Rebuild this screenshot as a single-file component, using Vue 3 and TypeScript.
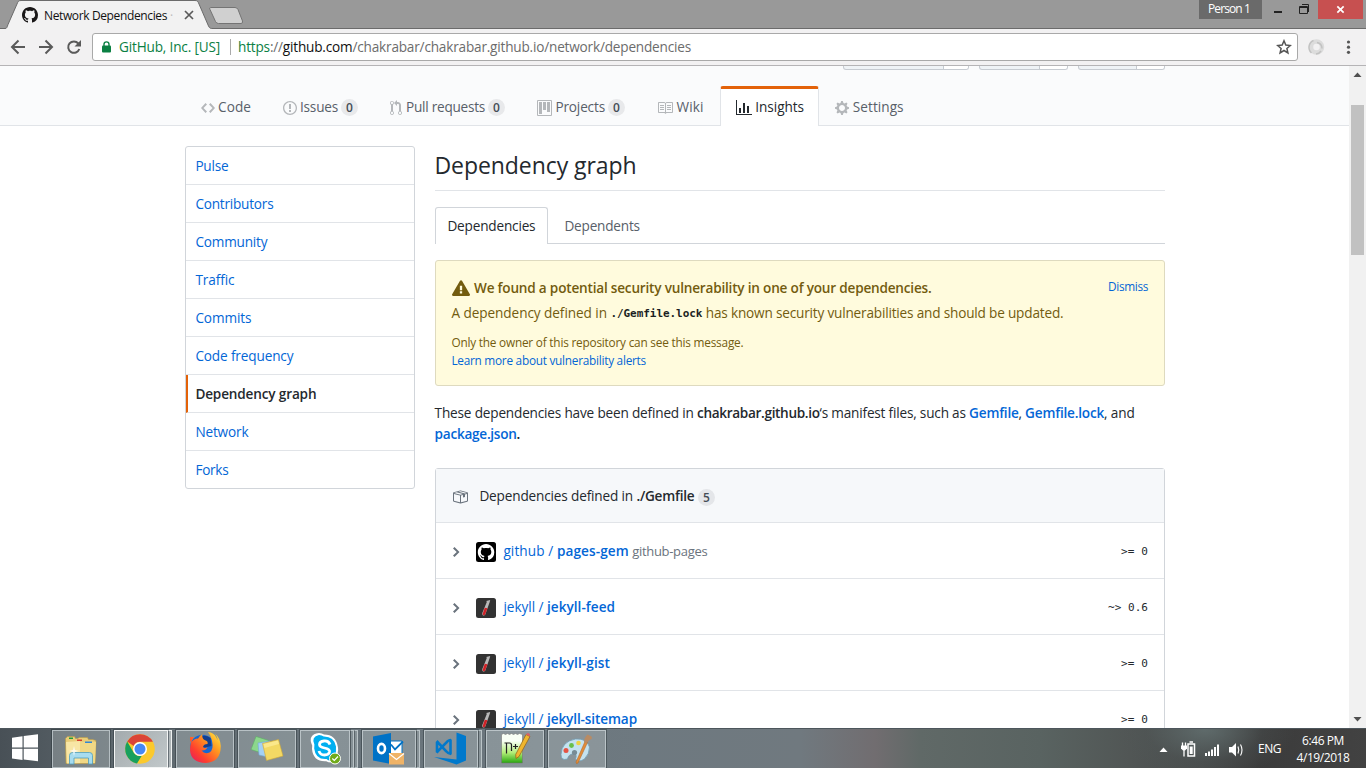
<script setup lang="ts">
interface NavItem { label: string; icon: string; box: string; iw: number; ih: number; slot: number; text: number; width: number; count?: number; active?: boolean }
interface Dep { owner: string; name: string; ownerW: number; nameW: number; note?: string; version: string; versionW: number }

// Spreads the letters of an element so that its text takes the given width.
const vFit = {
  mounted(el: HTMLElement, binding: { value: number }) {
    const natural = el.getBoundingClientRect().width
    const count = (el.textContent ?? '').length
    el.style.letterSpacing = `${(binding.value - natural) / count}px`
  },
}

const mark = 'M8 0C3.58 0 0 3.58 0 8c0 3.54 2.29 6.53 5.47 7.59.4.07.55-.17.55-.38 0-.19-.01-.82-.01-1.49-2.01.37-2.53-.49-2.69-.94-.09-.23-.48-.94-.82-1.13-.28-.15-.68-.52-.01-.53.63-.01 1.08.58 1.23.82.72 1.21 1.87.87 2.33.66.07-.52.28-.87.51-1.07-1.78-.2-3.64-.89-3.64-3.95 0-.87.31-1.59.82-2.15-.08-.2-.36-1.02.08-2.12 0 0 .67-.21 2.2.82.64-.18 1.32-.27 2-.27.68 0 1.36.09 2 .27 1.53-1.04 2.2-.82 2.2-.82.44 1.1.16 1.92.08 2.12.51.56.82 1.27.82 2.15 0 3.07-1.87 3.75-3.65 3.95.29.25.54.73.54 1.48 0 1.07-.01 1.93-.01 2.2 0 .21.15.46.55.38A8.013 8.013 0 0 0 16 8c0-4.42-3.58-8-8-8z'

const nav: NavItem[] = [
  { label: 'Code', box: '0 0 14 16', iw: 14, ih: 16, slot: 17, text: 33, width: 82, icon: 'M9.5 3L8 4.5 11.5 8 8 11.5 9.5 13 14 8 9.5 3zm-5 0L0 8l4.5 5L6 11.5 2.5 8 6 4.5 4.5 3z' },
  { label: 'Issues', box: '0 0 14 16', iw: 14, ih: 16, slot: 17, text: 38, width: 107, count: 0, icon: 'M7 2.3c3.14 0 5.7 2.56 5.7 5.7s-2.56 5.7-5.7 5.7A5.71 5.71 0 0 1 1.3 8c0-3.14 2.56-5.7 5.7-5.7zM7 1C3.14 1 0 4.14 0 8s3.14 7 7 7 7-3.14 7-7-3.14-7-7-7zm1 3H6v5h2V4zm0 6H6v2h2v-2z' },
  { label: 'Pull requests', box: '0 0 12 16', iw: 12, ih: 16, slot: 16, text: 79, width: 147, count: 0, icon: 'M11 11.28V5c-.03-.78-.34-1.47-.94-2.06C9.46 2.35 8.78 2.03 8 2H7V0L4 3l3 3V4h1c.27.02.48.11.69.31.21.2.3.42.31.69v6.28A1.993 1.993 0 0 0 10 15a1.993 1.993 0 0 0 1-3.72zm-1 2.92c-.66 0-1.2-.55-1.2-1.2 0-.65.55-1.2 1.2-1.2.65 0 1.2.55 1.2 1.2 0 .65-.55 1.2-1.2 1.2zM4 3c0-1.11-.89-2-2-2a1.993 1.993 0 0 0-1 3.72v6.56A1.993 1.993 0 0 0 2 15a1.993 1.993 0 0 0 1-3.72V4.72c.59-.34 1-.98 1-1.72zm-.8 10c0 .66-.55 1.2-1.2 1.2-.65 0-1.2-.55-1.2-1.2 0-.65.55-1.2 1.2-1.2.65 0 1.2.55 1.2 1.2zM2 4.2C1.34 4.2.8 3.65.8 3c0-.65.55-1.2 1.2-1.2.65 0 1.2.55 1.2 1.2 0 .65-.55 1.2-1.2 1.2z' },
  { label: 'Projects', box: '0 0 15 16', iw: 15, ih: 16, slot: 18.4, text: 49.6, width: 120, count: 0, icon: 'M10 12h3V2h-3v10zm-4-2h3V2H6v8zm-4 4h3V2H2v12zm-1 1h13V1H1v14zM14 0H1a1 1 0 0 0-1 1v14a1 1 0 0 0 1 1h13a1 1 0 0 0 1-1V1a1 1 0 0 0-1-1z' },
  { label: 'Wiki', box: '0 0 16 16', iw: 16, ih: 16, slot: 19.6, text: 27, width: 79, icon: 'M3 5h4v1H3V5zm0 3h4V7H3v1zm0 2h4V9H3v1zm11-5h-4v1h4V5zm0 2h-4v1h4V7zm0 2h-4v1h4V9zm2-6v9c0 .55-.45 1-1 1H9.5l-1 1-1-1H2c-.55 0-1-.45-1-1V3c0-.55.45-1 1-1h5.5l1 1 1-1H15c.55 0 1 .45 1 1zm-8 .5L7.5 3H2v9h6V3.5zm7-.5H9.5l-.5.5V12h6V3z' },
  { label: 'Insights', box: '0 0 16 16', iw: 16, ih: 16, slot: 19.3, text: 48.7, width: 99, active: true, icon: 'M16 14v1H0V0h1v14h15zM5 13H3V8h2v5zm4 0H7V3h2v10zm4 0h-2V6h2v7z' },
  { label: 'Settings', box: '0 0 14 16', iw: 14, ih: 16, slot: 17.8, text: 50.8, width: 101, icon: 'M14 8.77v-1.6l-1.94-.64-.45-1.09.88-1.84-1.13-1.13-1.81.91-1.09-.45-.69-1.92h-1.6l-.63 1.94-1.11.45-1.84-.88-1.13 1.13.91 1.81-.45 1.09L0 7.23v1.59l1.94.64.45 1.09-.88 1.84 1.13 1.13 1.81-.91 1.09.45.69 1.92h1.59l.63-1.94 1.11-.45 1.84.88 1.13-1.13-.92-1.81.47-1.09L14 8.75v.02zM7 11c-1.66 0-3-1.34-3-3s1.34-3 3-3 3 1.34 3 3-1.34 3-3 3z' },
]

const menu = [
  { label: 'Pulse', w: 33 }, { label: 'Contributors', w: 78 }, { label: 'Community', w: 72 },
  { label: 'Traffic', w: 39 }, { label: 'Commits', w: 56 }, { label: 'Code frequency', w: 98 },
  { label: 'Dependency graph', w: 121, active: true }, { label: 'Network', w: 53 }, { label: 'Forks', w: 33 },
]

const deps: Dep[] = [
  { owner: 'github', name: 'pages-gem', ownerW: 53.5, nameW: 72, note: 'github-pages', version: '>= 0', versionW: 27 },
  { owner: 'jekyll', name: 'jekyll-feed', ownerW: 43.6, nameW: 68, version: '~> 0.6', versionW: 40 },
  { owner: 'jekyll', name: 'jekyll-gist', ownerW: 43.6, nameW: 63, version: '>= 0', versionW: 27 },
  { owner: 'jekyll', name: 'jekyll-sitemap', ownerW: 43.6, nameW: 90, version: '>= 0', versionW: 27 },
]
</script>

<template>
  <div class="screen">
    <header class="tabstrip">
      <div class="tab">
        <svg class="tab-shape" viewBox="0 0 250 30"><path d="M0 28.500H5C7 28.500 7 27 8 24.500L17 4C18 1.500 18.500.500 21 .500H195C197.500 .500 198 1.500 199 4L208.500 26C209.500 28.500 211 28.500 213 28.500V30H0z" fill="#f2f2f2" stroke="#6b6b6b" /><path d="M0 29.500H214" stroke="#f2f2f2" /><path d="M210.500 7.500H235Q237 7.500 238 9.500L242.500 21Q243 23.500 241 23.500H218.500Q216.500 23.500 215.500 21.500L210 9.500Q209 7.500 210.500 7.500z" fill="#d0d0d0" stroke="#747474" /></svg>
        <svg class="favicon" viewBox="0 0 16 16"><path :d="mark" fill="#191717" /></svg>
        <span v-fit="123" class="tab-title">Network Dependencies</span><span class="tab-fade">·</span>
        <svg class="tab-close" viewBox="0 0 10 10"><path d="M1 1l8 8M9 1L1 9" stroke="#5a5a5a" stroke-width="1.700" /></svg>
      </div>
      <div class="win-controls">
        <span class="person"><span v-fit="42" class="fit">Person 1</span></span>
        <svg class="min-max" viewBox="1262 0 56 19"><path d="M1274 12h8" stroke="#222" stroke-width="2" /><path d="M1299.500 6.500h8v7h-8zM1299 7.500h9M1302 4.500h6.500V12" fill="none" stroke="#222" /></svg>
        <span class="close"><svg viewBox="0 0 10 10"><path d="M1.500 1.500l7 7M8.500 1.500l-7 7" stroke="#fff" stroke-width="1.900" /></svg></span>
      </div>
    </header>

    <div class="toolbar">
      <svg class="nav-btns" viewBox="0 30 92 35"><g fill="none" stroke="#5a5a5a" stroke-width="2"><path d="M25 47H12.500M18.500 40.500L12 47l6.500 6.500" /><path d="M39 47h12.500M45.500 40.500L52 47l-6.500 6.500" /><path d="M78.300 43.500A5.700 5.700 0 1 0 79.300 49" /></g><path d="M81 40v6.500h-6.500z" fill="#5a5a5a" /></svg>
      <div class="omnibox">
        <svg class="lock" viewBox="0 0 9 12"><rect y="4.500" width="9" height="7" rx="1" fill="#0b8043" /><path d="M2 5V3.200a2.500 2.300 0 0 1 5 0V5" fill="none" stroke="#0b8043" stroke-width="1.400" /></svg>
        <span v-fit="101" class="secure">GitHub, Inc. [US]</span>
        <i class="divider"></i>
        <span v-fit="453" class="url"><b>https</b>://<em>github.com</em>/chakrabar/chakrabar.github.io/network/dependencies</span>
        <svg class="star" viewBox="0 0 16 16"><path d="M8 1.800l1.800 4.300 4.500.4-3.400 3 1 4.400L8 11.500l-3.900 2.400 1-4.400-3.400-3 4.500-.4z" fill="none" stroke="#555" stroke-width="1.500" /></svg>
      </div>
      <svg class="toolbar-end" viewBox="1298 30 68 35"><circle cx="1316.500" cy="47" r="5.500" fill="none" stroke="#dcdcdc" stroke-width="4.500" /><path d="M1311.500 53a7.500 7.500 0 0 1 2-12.500M1317 42.500q5 1 5 6M1321 51a6.500 6.500 0 0 1-5 3" fill="none" stroke="#c2c2c2" stroke-width="1.500" /><circle cx="1348.500" cy="42" r="1.600" fill="#555" /><circle cx="1348.500" cy="47.200" r="1.600" fill="#555" /><circle cx="1348.500" cy="52.300" r="1.600" fill="#555" /></svg>
    </div>

    <div class="viewport">
      <div class="page">
        <div class="repo-head">
          <div class="stumps">
            <span class="stump watch"><i></i></span><span class="stump starred"><i></i></span><span class="stump fork"><i></i></span>
          </div>
          <nav class="reponav">
            <a v-for="n in nav" :key="n.label" class="nav-item" :class="{ active: n.active }" :style="{ width: n.width + 'px' }">
              <span class="nav-icon" :style="{ width: n.slot + 'px' }"><svg :viewBox="n.box" :width="n.iw" :height="n.ih"><path :d="n.icon" fill="currentColor" fill-rule="evenodd" /></svg></span>
              <span v-fit="n.text" class="fit">{{ n.label }}</span>
              <span v-if="n.count !== undefined" class="counter nav-counter">{{ n.count }}</span>
            </a>
          </nav>
        </div>

        <div class="columns">
          <aside class="menu">
            <a v-for="m in menu" :key="m.label" class="menu-item" :class="{ selected: m.active }"><span v-fit="m.w" class="fit">{{ m.label }}</span></a>
          </aside>

          <main class="content">
            <div class="subhead"><h2 v-fit="202" class="fit">Dependency graph</h2></div>
            <div class="tabnav">
              <a class="tabnav-tab on"><span v-fit="88" class="fit">Dependencies</span></a>
              <a class="tabnav-tab"><span v-fit="75.500" class="fit">Dependents</span></a>
            </div>

            <section class="flash">
              <div class="flash-text">
                <div class="flash-title">
                  <svg viewBox="0 0 16 16" width="18" height="18"><path fill="currentColor" fill-rule="evenodd" d="M8.893 1.500c-.183-.31-.52-.5-.887-.5s-.703.19-.886.5L.138 13.499a.98.98 0 0 0 0 1.001c.193.31.53.501.886.501h13.964c.367 0 .704-.19.877-.5a1.030 1.030 0 0 0 .01-1.002L8.893 1.500zm.133 11.497H6.987v-2.003h2.039v2.003zm0-3.004H6.987V5.987h2.039v4.006z" /></svg>
                  <strong v-fit="457.500" class="fit">We found a potential security vulnerability in one of your dependencies.</strong>
                </div>
                <p class="flash-line"><span v-fit="159" class="fit">A dependency defined in </span><code v-fit="92" class="fit">./Gemfile.lock</code><span v-fit="361" class="fit"> has known security vulnerabilities and should be updated.</span></p>
                <p class="flash-small"><span v-fit="292" class="fit">Only the owner of this repository can see this message.</span></p>
                <p class="flash-small"><a v-fit="194.500" class="fit link">Learn more about vulnerability alerts</a></p>
              </div>
              <a class="dismiss"><span v-fit="40" class="fit">Dismiss</span></a>
            </section>

            <div class="intro">
              <p><span v-fit="262.500" class="fit">These dependencies have been defined in </span><strong v-fit="122.500" class="fit">chakrabar.github.io</strong><span v-fit="149.500" class="fit">‘s manifest files, such as </span><strong v-fit="49.500" class="fit link">Gemfile</strong><span v-fit="6.500" class="fit">, </span><strong v-fit="79" class="fit link">Gemfile.lock</strong><span v-fit="30.500" class="fit">, and</span></p>
              <p><strong v-fit="82" class="fit link">package.json</strong><strong class="fit">.</strong></p>
            </div>

            <section class="box">
              <div class="box-head">
                <svg class="package" viewBox="0 0 16 16" width="16" height="16"><path fill="currentColor" fill-rule="evenodd" d="M1 4.270v7.470c0 .45.3.84.75.97l6.500 1.730c.16.05.34.05.5 0l6.500-1.730c.45-.13.75-.52.75-.97V4.270c0-.45-.3-.84-.75-.97l-6.500-1.740a1.400 1.400 0 0 0-.5 0L1.750 3.300c-.45.13-.75.52-.75.97zm7 9.090l-6-1.590V5l6 1.610v6.750zM2 4l2.500-.67L11 5.060l-2.500.67L2 4zm13 7.770l-6 1.590V6.610l2-.55V8.500l2-.53V5.530L15 5v6.770zm-2-7.240L6.500 2.800l2-.53L15 4l-2 .53z" /></svg>
                <span v-fit="157" class="fit">Dependencies defined in </span><strong v-fit="58" class="fit">./Gemfile</strong><span class="counter box-counter">5</span>
              </div>
              <div v-for="d in deps" :key="d.name" class="row">
                <svg class="chevron" viewBox="0 0 8 16" width="8" height="16"><path d="M7.500 8l-5 5L1 11.500 4.750 8 1 4.500 2.500 3l5 5z" fill="#6a737d" /></svg>
                <svg v-if="d.owner === 'github'" class="avatar" viewBox="0 0 20 20"><rect width="20" height="20" rx="2.500" fill="#000" /><path :d="mark" fill="#fff" transform="translate(1.800 2) scale(1.030)" /></svg>
                <svg v-else class="avatar" viewBox="0 0 20 20"><rect width="20" height="20" rx="2.500" fill="#323232" /><path d="M10.300 3l3.900-1-.5 1.900-4.400 12.700q-1 1.500-2.300.8-1.200-.8-.7-2.300L10.800 4z" fill="#b8b8b8" /><path d="M8.700 9.700l2.800.5-2.400 6.200q-.8 1.200-1.700.8-1-.5-.6-1.800z" fill="#cf2227" /></svg>
                <span class="dep-name link"><span v-fit="d.ownerW" class="fit">{{ d.owner + ' / ' }}</span><strong v-fit="d.nameW" class="fit">{{ d.name }}</strong></span>
                <span v-if="d.note" v-fit="75" class="fit note">{{ d.note }}</span>
                <span class="version"><span v-fit="d.versionW" class="fit">{{ d.version }}</span></span>
              </div>
            </section>
          </main>
        </div>
      </div>
      <div class="scrollbar">
        <svg viewBox="0 0 17 17"><path d="M4.500 11l4-4.500 4 4.500z" fill="#505050" /></svg>
        <div class="thumb"></div>
        <svg viewBox="0 0 17 17"><path d="M4.500 6l4 4.500 4-4.500z" fill="#505050" /></svg>
      </div>
    </div>

    <footer class="taskbar">
      <svg class="start" viewBox="0 728 52 40"><path d="M12 736.800l10.500-1.500v11.300H12zM23.700 735.100L38 733.300v13.300H23.700zM12 747.800h10.500v11.300L12 757.600zM23.700 747.800H38v12.500l-14.300-1.800z" fill="#fff" /></svg>
      <div class="apps">
        <div class="app"><svg class="icon" viewBox="52 729 58 38">
          <path d="M65.500 737.500l2-2h7l1 2h2l2-1h8l1 2h4l3.500 1-1 23H66z" fill="#e9cd78" stroke="#b99a48" stroke-width=".6" /><path d="M66 741l14-1 1 22-14 .5z" fill="#f8e6a5" /><path d="M80 741h16l-1 21H80z" fill="#f1d885" /><path d="M69 736.500h4v1.500h-4z" fill="#219b3a" /><path d="M77 738.500h5v1.500h-5z" fill="#d63a2d" /><path d="M85 740.500h7v1.500h-7z" fill="#3486d2" /><path d="M69.500 763v-8.500q0-3 3-3h17q3 0 3 3v8.500h-4v-6H74v6z" fill="#a7dcef" stroke="#4e9dbd" stroke-width=".8" /><path d="M74 745l1 4 4 1-4 1-1 4-1-4-4-1 4-1z" fill="#fff" opacity=".75" /></svg></div>
        <div class="stack"><div class="app lit"><svg class="icon" viewBox="114 729 54 38">
          <circle cx="140" cy="748" r="14.800" fill="#fbc92c" /><path d="M127.200 740.600A14.800 14.800 0 0 1 152.900 740.800H140a7 7 0 0 0-6.300 4.200z" fill="#db4437" /><path d="M127.200 740.600l6.600 11.100q3 4.200 7.800 3.200l-4.600 7.700A14.800 14.800 0 0 1 127.200 740.600z" fill="#18a05e" /><circle cx="140" cy="748" r="7" fill="#fff" /><circle cx="140" cy="748" r="5.500" fill="#4688f4" /></svg></div><div class="sliver lit"></div></div>
        <div class="app"><svg class="icon" viewBox="178.500 729.500 58 38">
          <defs><linearGradient id="fox" x1="1" y1="0" x2="0" y2="1"><stop offset="0" stop-color="#fff04a" /><stop offset=".35" stop-color="#ff9a1f" /><stop offset=".7" stop-color="#ff402e" /><stop offset="1" stop-color="#e31566" /></linearGradient></defs>
          <circle cx="205" cy="746.500" r="12.300" fill="#1767d2" /><path d="M200 738q6-5 13-.5l1 8-9 2z" fill="#153e8d" /><path d="M192.500 736.500q-.5 3 1 5.500 3-4 7-4 2-3.500 4.500-4.500-1 4 2 6 4 1 3 4-4 0-4.500 3 1.500 1.500 4.500.5-2 3.500-6 3 3 4 8 2 4.500-3 2.500-11.500-1-5.500-4-9 6 .5 8.300 5.500 1 2 1.500 2.500-.5-3-2.500-6 5 4 5.500 12 0 16-15 17-15-.5-15.800-13-.1-7.500 4-13z" fill="url(#fox)" /></svg></div>
        <div class="app"><svg class="icon" viewBox="238 730 58 38">
          <path d="M256 736.500l13 4-6 13-12-4z" fill="#8cd78d" stroke="#5cac65" stroke-width=".6" /><path d="M258 743l12-2v16.500l-11-2.500z" fill="#a4d1f4" stroke="#71a9d8" stroke-width=".6" /><path d="M262.500 743.500l16-4L283 756l-16.500 4.500z" fill="#f3d964" stroke="#cda73a" stroke-width=".6" /><path d="M263.500 744l14.500-3.500 1 3.500-14.500 4z" fill="#fff0a0" opacity=".65" /></svg></div>
        <div class="stack skype-stack"><div class="app"><svg class="icon" viewBox="300 729.500 50 38">
          <path d="M319 732.500q3 0 5 1.500 12 0 14 13 .5 3-.3 5 2 9-6.500 10-3 0-5-1.300-13 .8-14.200-12.200l.2-3.500q-5-11 6.800-12.500z" fill="#fff" /><path d="M319 734.500q3 0 4.700 1.500 10.300-.2 12.300 10l-.1 6q1.200 7.500-4.900 8-3 .1-4.500-1.500-11 .8-12.300-10.500l.2-4q-3.500-8 4.600-9.500z" fill="#00aff0" /><path d="M330 744q-1.500-4-6-3.500-4.500.5-4.500 3.500 0 2.500 5 3.500 5.500 1 5 4-.7 3-5 3-4.500 0-5.500-4" fill="none" stroke="#fff" stroke-width="2.800" /><circle cx="335" cy="758" r="5.500" fill="#70ab1b" stroke="#fff" /><path d="M332.300 758l2 2 3.700-4" fill="none" stroke="#fff" stroke-width="1.200" /></svg></div><div class="sliver"></div><div class="sliver"></div></div>
        <div class="stack"><div class="app"><svg class="icon" viewBox="362 729.500 54 38">
          <path d="M390 740.500h12v15h-12z" fill="#fff" stroke="#0072c6" /><path d="M391 744l4 5 8-8" fill="none" stroke="#0072c6" stroke-width="1.800" /><path d="M373 736l18-3.500v31L373 760z" fill="#0072c6" /><ellipse cx="381.500" cy="748" rx="3.500" ry="4.600" fill="none" stroke="#fff" stroke-width="2.600" /><path d="M389 752.500h15v11.500h-15z" fill="#efb367" /><path d="M389 753l7.500 6 7.500-6" fill="none" stroke="#fff" stroke-width="1.200" /></svg></div><div class="sliver"></div></div>
        <div class="stack"><div class="app"><svg class="icon" viewBox="424 729.500 54 38">
          <path d="M456.500 732l9.500 3.500v24.500l-9.500 4-22.500-7.500 22.500 2.500z" fill="#0079cc" /><path d="M451 739.500q-3 0-5 3l-8.500 8.500M451 753.500q-2.500 0-4.500-2.500l-9-9.500M438.500 740.500l-1.500 1.500v9l1.500 1M450.500 739v15" fill="none" stroke="#0079cc" stroke-width="2.600" /></svg></div><div class="sliver"></div></div>
        <div class="app"><svg class="icon" viewBox="486 729.500 58 38">
          <defs><linearGradient id="pad" x1="0" y1="0" x2="0" y2="1"><stop offset=".25" stop-color="#f9fff5" /><stop offset=".65" stop-color="#b1ed77" /><stop offset="1" stop-color="#27a60e" /></linearGradient></defs>
          <path d="M501.500 734l2-1 2 1 2-1 2 1 2-1 2 1 2-1 2 1 2-1 3 1v28.500h-21z" fill="url(#pad)" stroke="#777" stroke-width=".6" /><path d="M506.500 753v-10.500M504.500 742.500h5q2 0 2 2v6M513 746h5M515.500 743.500v5M519.500 746h4M521.500 744v4" fill="none" stroke="#222" stroke-width="1.200" /><path d="M526 734l4 2-11 20-3 2-.3-4z" fill="#efb62e" stroke="#916017" stroke-width=".7" /><path d="M526 734q2-3 4 0l0 2z" fill="#db5f66" /></svg></div>
        <div class="app"><svg class="icon" viewBox="548.500 729.500 58 38">
          <path d="M561.500 754q.5-13 14.500-15.500 11-1 14 8 0 7-5 12-6 4-9 0 2-5-2-5-5 0-6 5-6.500 2-6.500-4.500z" fill="#c5e2ef" stroke="#719db4" stroke-width=".8" /><circle cx="566.500" cy="750" r="2.500" fill="#e45445" /><circle cx="572" cy="745" r="2.400" fill="#68bf4b" /><circle cx="579" cy="742.500" r="2.300" fill="#eed344" /><circle cx="575" cy="752" r="2.600" fill="#778c96" /><path d="M585.500 741l2.500 1-9.500 20.500q-2 1.500-2-1z" fill="#e28c3a" stroke="#ad6422" stroke-width=".5" /><path d="M584.500 741.500q0-4 3.500-7.500l4 2 .5 2q-3.500 2-5 4.500z" fill="#b88b64" /></svg></div>
      </div>
      <svg class="tray" viewBox="1150 728 106 40"><path d="M1159.500 751l4-4.500 4 4.500z" fill="#fff" /><g fill="none" stroke="#fff"><path d="M1188 743h6.500v12H1188zM1189.500 741h3.500" stroke-width="1.500" /><path d="M1191.200 745.500v7.500" stroke-width="3" /><path d="M1182.500 741.500v4M1185.500 741.500v4M1184 748v7.500" stroke-width="1.300" /></g><path d="M1181 744.500h6v3l-2 2h-2l-2-2z" fill="#fff" /><path d="M1205 752h2v3h-2zM1208 750.500h2v4.500h-2zM1211 748.500h2v6.500h-2zM1214 746h2v9h-2zM1217 743.500h2V755h-2z" fill="#fff" /><path d="M1229 746h3l4-4v13.500l-4-4h-3z" fill="#fff" /><path d="M1238 745.500q1.500 3.500 0 7M1240.500 743.500q3 5.500 0 11" fill="none" stroke="#fff" stroke-width="1.100" /></svg>
      <span class="lang"><span v-fit="23" class="fit">ENG</span></span>
      <div class="clock"><span v-fit="42" class="fit">6:46 PM</span><span v-fit="53" class="fit">4/19/2018</span></div>
    </footer>
  </div>
</template>

<style>
html, body { margin: 0; overflow: hidden; }
</style>

<style scoped>
.screen { width: 1366px; height: 768px; display: flex; flex-direction: column; overflow: hidden; background: #fff; font: 13.6px/21px "Open Sans", "Noto Sans", sans-serif; color: #24292e; }
.screen * { box-sizing: border-box; }
svg { display: block; flex: none; }
p, h2 { margin: 0; }
strong { font-weight: 600; }
.fit { display: inline-block; white-space: pre; flex: none; }
.link { color: #0366d6; }

.tabstrip { height: 29px; flex: none; display: flex; justify-content: space-between; background: #999; box-shadow: inset 0 -1px #6b6b6b; }
.tab { position: relative; width: 250px; height: 30px; display: flex; align-items: center; padding-left: 22px; }
.tab-shape { position: absolute; left: 0; top: 0; width: 250px; height: 30px; }
.favicon { position: relative; width: 16px; height: 16px; margin-right: 6px; }
.tab-title { position: relative; flex: none; font-size: 12px; white-space: nowrap; color: #111; }
.tab-fade { position: relative; width: 17px; padding-left: 3px; color: #bbb; font-size: 12px; }
.tab-close { position: relative; width: 10px; height: 10px; }
.win-controls { display: flex; height: 19px; padding-right: 3px; }
.person { width: 63px; padding-left: 9px; background: #6a6a6a; color: #fff; font-size: 12px; line-height: 18px; white-space: nowrap; }
.min-max { width: 56px; height: 19px; }
.close { width: 45px; display: flex; align-items: center; justify-content: center; background: #c75050; }
.close svg { width: 9px; height: 9px; }

.toolbar { height: 37px; flex: none; display: flex; align-items: center; background: #f2f1f2; border-bottom: 1px solid #b5b4b6; }
.nav-btns { width: 92px; height: 35px; }
.omnibox { width: 1206px; height: 28px; display: flex; align-items: center; padding: 0 5px 0 9px; background: #fff; border: 1px solid #a9a9a9; border-radius: 3px; white-space: nowrap; font-size: 13.6px; }
.lock { width: 9px; height: 12px; margin-right: 8px; }
.secure, .url { margin-bottom: 2px; }
.secure { color: #0b8043; }
.divider { width: 1px; height: 16px; margin: 0 7px 0 10px; background: #aaa; }
.url { color: #6c6c6c; }
.url b { font-weight: 400; color: #0b8043; }
.url em { font-style: normal; color: #111; }
.star { width: 16px; height: 16px; margin-left: auto; }
.toolbar-end { width: 68px; height: 35px; }

.viewport { height: 662px; flex: none; display: flex; overflow: hidden; }
.page { width: 1349px; height: 662px; overflow: hidden; }
.repo-head { height: 60px; padding: 0 184px 0 185px; background: #fafbfc; border-bottom: 1px solid #e1e4e8; }
.stumps { height: 20px; display: flex; justify-content: flex-end; gap: 10px; }
.stump { height: 4px; display: flex; justify-content: flex-end; background: #eff3f6; border: 1px solid #c6cbd1; border-top: 0; border-radius: 0 0 3px 3px; overflow: hidden; }
.stump i { background: #fff; border-left: 1px solid #c6cbd1; }
.watch { width: 126px; } .watch i { width: 25px; }
.starred { width: 89px; } .starred i { width: 28px; }
.fork { width: 87px; } .fork i { width: 28px; }
.reponav { height: 40px; display: flex; }
.nav-item { height: 40px; flex: none; display: flex; align-items: center; padding: 0 0 0 15px; border: 1px solid transparent; border-top: 3px solid transparent; border-bottom: 0; border-radius: 3px 3px 0 0; color: #586069; }
.nav-item .fit { margin-bottom: 2px; }
.nav-icon { color: #b4b7ba; flex: none; padding-top: 1px; }
.nav-item.active { background: #fff; border-color: #e36209 #e1e4e8 transparent; color: #24292e; }
.active .nav-icon { color: #24292e; }
.counter { flex: none; width: 17px; height: 17px; border-radius: 9px; background: rgba(27, 31, 35, .08); text-align: center; font-size: 12px; line-height: 17px; font-weight: 600; color: #444d56; }
.nav-counter { margin-left: 3px; }
.columns { display: flex; gap: 20px; padding: 20px 184px 0 185px; }
.menu { width: 230px; height: 343px; flex: none; border: 1px solid #d1d5da; border-radius: 3px; overflow: hidden; }
.menu-item { height: 38px; display: flex; align-items: center; padding: 0 9.4px 1px; border-bottom: 1px solid #e1e4e8; color: #0366d6; }
.menu-item:last-child { border-bottom: 0; padding-bottom: 2px; }
.menu-item.selected { border-left: 2px solid #e36209; padding-left: 7.4px; color: #24292e; font-weight: 600; }

.content { width: 730px; flex: none; }
.subhead { height: 45px; border-bottom: 1px solid #e1e4e8; }
h2 { margin-left: -.5px; font-size: 23px; font-weight: 400; line-height: 39px; }
.tabnav { height: 37px; display: flex; margin-top: 16px; box-shadow: inset 0 -1px #d1d5da; }
.tabnav-tab { padding: 7px 11.4px; border: 1px solid transparent; border-bottom: 0; color: #586069; }
.tabnav-tab:last-child { padding-left: 15.4px; }
.tabnav-tab.on { width: 113px; background: #fff; border-color: #d1d5da; border-radius: 3px 3px 0 0; color: #24292e; }
.flash { height: 126px; display: flex; justify-content: space-between; margin-top: 16px; padding: 16px; background: #fffbdd; border: 1px solid #dedabf; border-radius: 3px; color: #735c0f; }
.flash-title { height: 22px; display: flex; align-items: center; gap: 4px; }
.flash-title .fit { margin-bottom: 2px; }
.flash-text p { margin-left: -.6px; }
.flash-line { height: 30px; padding-top: 3px; line-height: 21px; }
.flash-line code { color: #1b1f23; font: 600 11px/23px "DejaVu Sans Mono", "Liberation Mono", monospace; }
.flash-small { font-size: 11.8px; line-height: 18px; }
.flash-small:nth-of-type(2) { padding-top: 4px; }
.flash-small .fit, .flash-line .fit { vertical-align: top; }
.dismiss { padding-top: 0; font-size: 11.8px; line-height: 18px; color: #0366d6; }
.intro { margin: 16px 0 0 -.4px; }
.intro p { height: 21px; white-space: nowrap; }
.intro .fit { vertical-align: top; }
.box { margin-top: 24px; border: 1px solid #d1d5da; border-radius: 3px; }
.box-head { height: 54px; display: flex; align-items: center; padding: 2px 0 0 16px; background: #f6f8fa; border-bottom: 1px solid #e1e4e8; }
.box-head .fit, .dep-name { margin-bottom: 2px; }
.package { margin-right: 11.4px; color: #6a737d; }
.box-counter { margin: 2px 0 0 3.5px; }
.row { height: 56px; display: flex; align-items: center; padding: 2px 16px 0; border-bottom: 1px solid #e1e4e8; }
.chevron { margin-right: 16px; }
.avatar { width: 20px; height: 20px; margin-right: 7.4px; }
.dep-name { display: flex; }
.note { margin-left: 3.4px; color: #6a737d; font-size: 13px; }
.version { margin-left: auto; font: 11px/20px "DejaVu Sans Mono", "Liberation Mono", monospace; }

.scrollbar { width: 17px; height: 662px; background: #f1f1f1; display: flex; flex-direction: column; align-items: center; }
.scrollbar svg { width: 17px; height: 17px; }
.thumb { width: 13px; height: 150px; margin: 22px 0 auto; background: #c1c1c1; }

.taskbar { height: 40px; flex: none; display: flex; align-items: center; border-top: 1px solid #4d565c; background: radial-gradient(ellipse 90px 50px at 1205px 0, #5f6b6b 0, rgba(80, 88, 88, .3) 65%, transparent 100%), linear-gradient(90deg, #485056 0, #5e686e 120px, #68737a 330px, #6e7980 640px, #70797f 800px, #716d70 875px, #606967 920px, #596361 1040px, #515655 1130px, #484b4b 1200px, #3b3b3b 1260px, #424242 1366px); color: #fff; }
.start { width: 52px; height: 40px; }
.apps { display: flex; gap: 4px; }
.app { width: 58px; height: 38px; background: rgba(205, 215, 215, .3); border: 1px solid rgba(220, 229, 231, .6); box-shadow: 0 0 0 1px rgba(38, 48, 53, .45); }
.icon { margin: -1px; width: calc(100% + 2px); height: calc(100% + 2px); overflow: visible; }
.stack { width: 58px; display: flex; }
.stack .app { width: 54px; }
.skype-stack .app { width: 50px; }
.sliver { width: 4px; height: 38px; background: rgba(205, 215, 215, .3); border: 1px solid rgba(220, 229, 231, .6); border-left: 1px solid rgba(38, 48, 53, .45); }
.app.lit { background: linear-gradient(135deg, rgba(220, 225, 225, .55), rgba(235, 240, 240, .7)); border-color: #f2f4f4; }
.sliver.lit { background: rgba(225, 230, 230, .6); border-color: #eef1f1; border-left-color: #687177; }
.tray { width: 106px; height: 40px; margin-left: auto; }
.lang { width: 37px; padding-left: 2px; font-size: 12px; }
.clock { width: 73px; padding-right: 13px; display: flex; flex-direction: column; align-items: center; font-size: 12px; line-height: 17px; }
</style>
